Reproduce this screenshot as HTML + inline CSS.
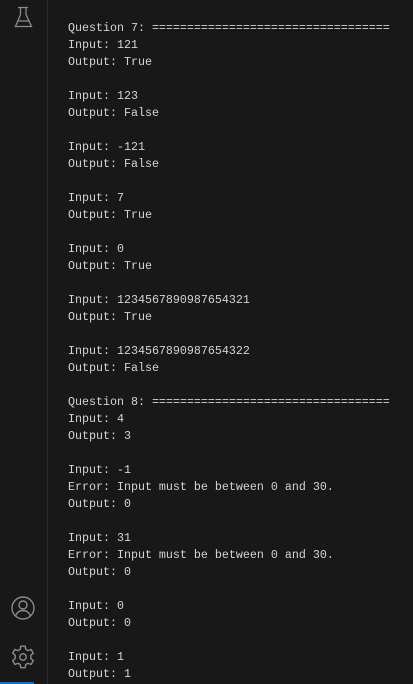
<!DOCTYPE html>
<html><head><style>
html,body{margin:0;padding:0;width:413px;height:684px;background:#181818;overflow:hidden}
.bar{position:absolute;left:0;top:0;width:47px;height:684px;background:#181818;border-right:1px solid #2b2b2b}
.blue{position:absolute;left:0;top:682px;width:34px;height:2px;background:#0078d4}
pre{position:absolute;left:68px;top:20px;margin:0;font-family:"Liberation Mono",monospace;font-size:11.67px;line-height:17px;color:#d4d4d4}
svg{position:absolute}
</style></head><body>
<div class="bar"></div>
<svg style="left:12px;top:4px" width="24" height="26" viewBox="0 0 24 26" fill="none" stroke="#8a8a8a" stroke-width="1.3">
<path d="M6 3.5h10M8.5 3.5v7L3.5 22.5h16L14 10.5v-7"/><path d="M6 17h11"/></svg>
<svg style="left:10px;top:595px" width="26" height="26" viewBox="0 0 26 26" fill="none" stroke="#8a8a8a" stroke-width="1.4">
<circle cx="13" cy="13" r="11"/><circle cx="13" cy="10" r="4"/><path d="M5.5 21c1.5-4 4-5.5 7.5-5.5s6 1.5 7.5 5.5"/></svg>
<svg style="left:10px;top:644px" width="26" height="26" viewBox="0 0 24 24" fill="none" stroke="#8a8a8a" stroke-width="1.3">
<path d="M10 2h4l.6 3 2 1.1 2.9-1 2 3.4-2.3 2v2.9l2.3 2-2 3.4-2.9-1-2 1.1-.6 3h-4l-.6-3-2-1.1-2.9 1-2-3.4 2.3-2V10.5l-2.3-2 2-3.4 2.9 1 2-1.1z"/><circle cx="12" cy="12" r="3"/></svg>
<div class="blue"></div>
<pre>Question 7: ==================================
Input: 121
Output: True

Input: 123
Output: False

Input: -121
Output: False

Input: 7
Output: True

Input: 0
Output: True

Input: 1234567890987654321
Output: True

Input: 1234567890987654322
Output: False

Question 8: ==================================
Input: 4
Output: 3

Input: -1
Error: Input must be between 0 and 30.
Output: 0

Input: 31
Error: Input must be between 0 and 30.
Output: 0

Input: 0
Output: 0

Input: 1
Output: 1</pre>
</body></html>
